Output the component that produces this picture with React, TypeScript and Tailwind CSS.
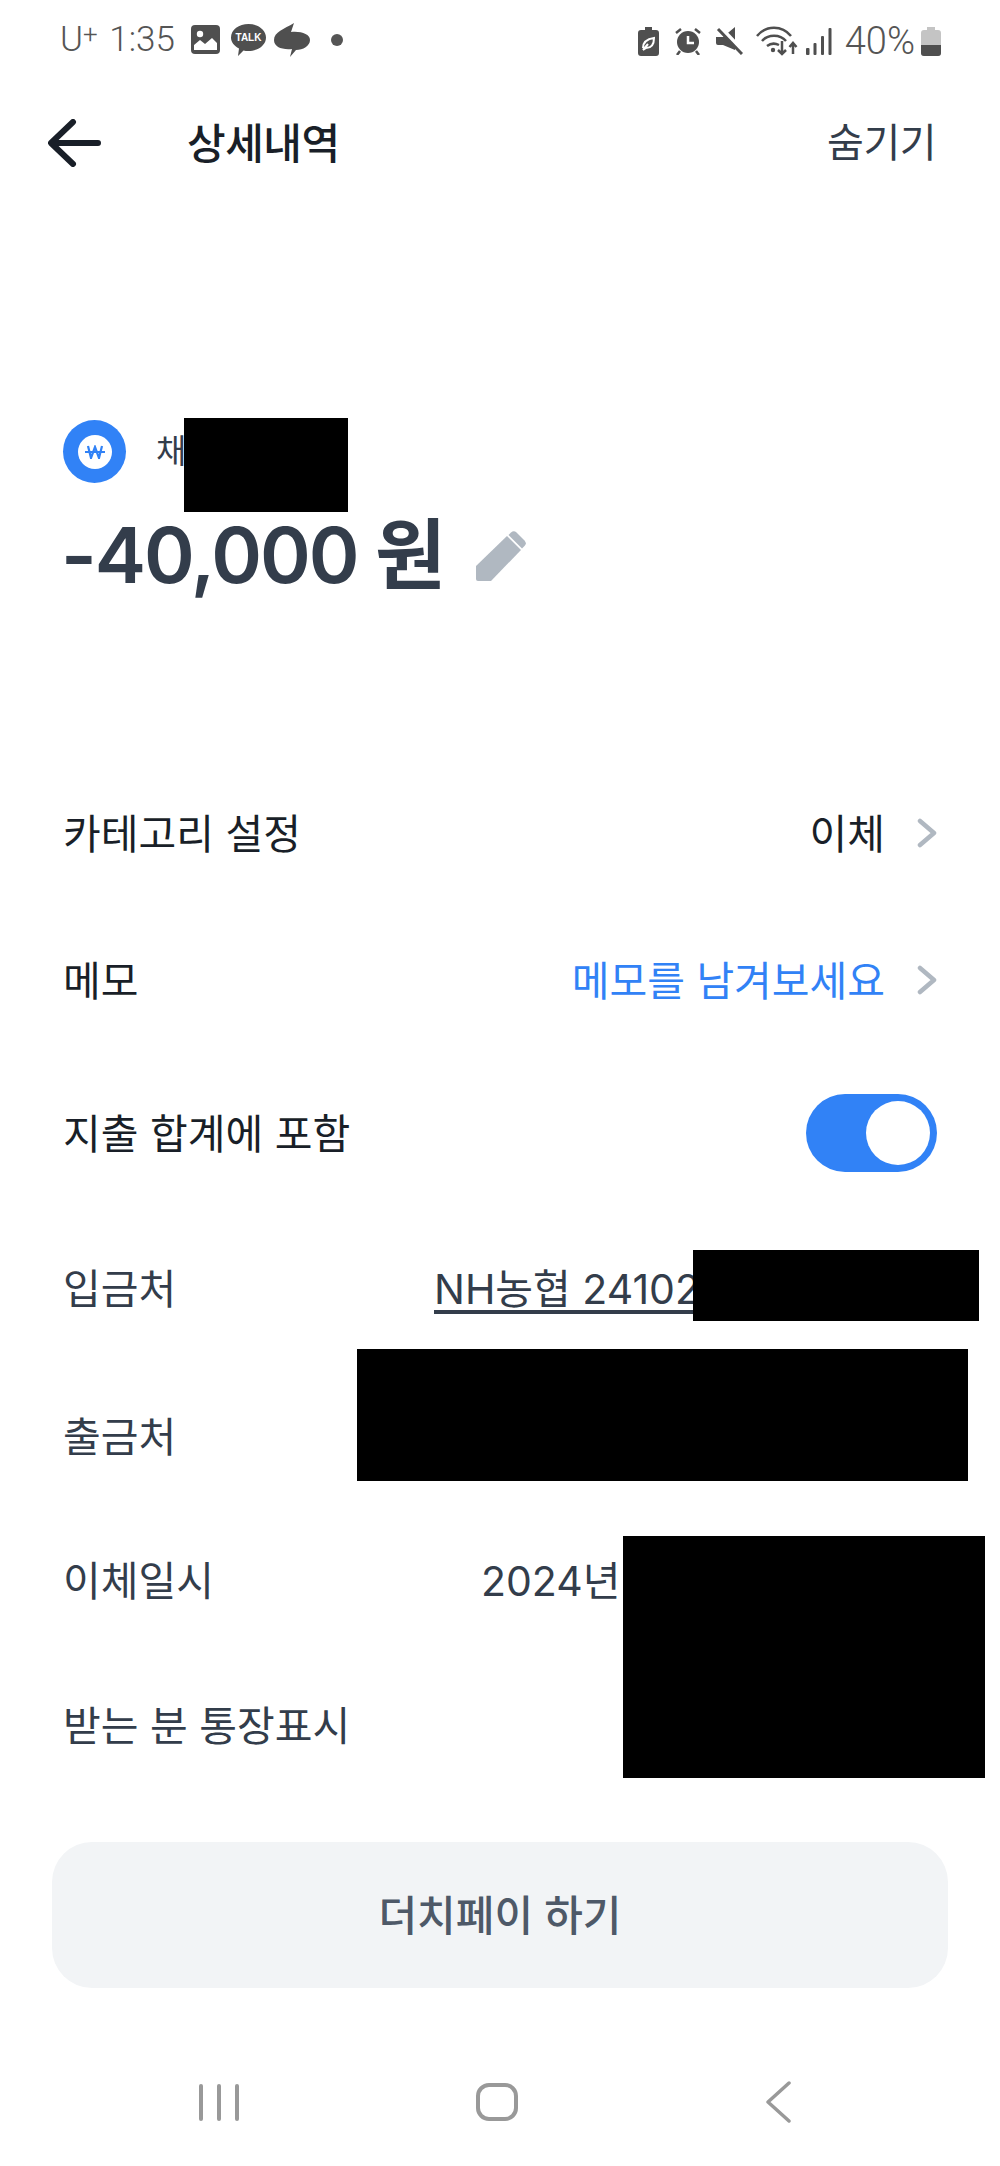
import React from 'react';

const koFont = 'font-["Inter","Noto_Sans_CJK_KR",sans-serif]';

// Rows under the amount. Heights differ in the capture, so they are per row.
const detailRows = [
  { label: '입금처', value: 'NH농협 24102', underline: true, height: 'h-[152px]', width: 'w-[503px]' },
  { label: '출금처', value: '', underline: false, height: 'h-[144px]', width: 'w-[503px]' },
  { label: '이체일시', value: '2024년', underline: false, height: 'h-[144px]', width: 'w-[456px]' },
  { label: '받는 분 통장표시', value: '', underline: false, height: 'h-[146px]', width: 'w-[456px]' }
];

const Chevron = () => (
  <svg width="20" height="30" viewBox="0 0 20 30" fill="none">
    <path d="M3 3l14 12L3 27" stroke="#b0b8c1" strokeWidth="4.500" strokeLinecap="round" strokeLinejoin="round" />
  </svg>
);

const StatusLeft = () => (
  <div className="flex items-center">
    <span className='font-["Roboto",sans-serif] font-light text-[35px] leading-none text-[#555] w-[131px] whitespace-nowrap'>
      U<sup className="text-[26px] leading-none top-[-8px] mr-[3px]">+</sup> 1:35
    </span>
    {/* gallery */}
    <svg width="29" height="29" viewBox="0 0 29 29" className="mr-[11px]">
      <rect width="29" height="29" rx="4" fill="#4f4f4f" />
      <circle cx="9" cy="9" r="3.200" fill="#fff" />
      <path d="M3 25v-5l6-5 5 4 7-6 5 5v7z" fill="#fff" />
    </svg>
    {/* kakaotalk */}
    <div className="relative w-[35px] h-[32px] mr-[8px]">
      <svg width="35" height="32" viewBox="0 0 35 32">
        <path d="M17.500 0C27 0 35 5.700 35 13.500S27 27 17.500 27c-2 0-3.500-.2-5-.6L7 32l1-7.500C3 22 0 18 0 13.500 0 5.700 8 0 17.500 0z" fill="#4f4f4f" />
      </svg>
      <span className='absolute left-0 right-0 top-[8px] text-center font-["Liberation_Sans",sans-serif] font-bold text-[10px] leading-[11px] text-white'>TALK</span>
    </div>
    {/* kakaostory */}
    <svg width="36" height="34" viewBox="0 0 36 34" className="mr-[21px]">
      <path d="M20 0l-3 9c10-1 19 2 19 8 0 6-7 10-14 10l-6 7 2-8C8 27 0 24 0 17 0 9 10 6 20 0z" fill="#4f4f4f" />
    </svg>
    <div className="w-[12px] h-[12px] rounded-full bg-[#555]" />
  </div>
);

const StatusRight = () => (
  <div className="flex items-center">
    {/* power saving battery */}
    <svg width="21" height="29" viewBox="0 0 21 29" className="mr-[15px]">
      <path d="M7 0h7v3h4a3 3 0 013 3v20a3 3 0 01-3 3H3a3 3 0 01-3-3V6a3 3 0 013-3h4z" fill="#4f4f4f" />
      <path d="M5 21c0-6 4-9 11-10 0 7-3 10-8 10l-3 2 5-6" fill="none" stroke="#fff" strokeWidth="2" />
    </svg>
    {/* alarm */}
    <svg width="28" height="28" viewBox="0 0 28 28" className="mr-[14px]">
      <circle cx="14" cy="15" r="11" fill="#4f4f4f" />
      <path d="M14 9v7h6" fill="none" stroke="#fff" strokeWidth="2.500" />
      <path d="M2 6l5-4M26 6l-5-4M6 24l-3 4M22 24l3 4" stroke="#4f4f4f" strokeWidth="2.500" />
    </svg>
    {/* muted speaker */}
    <svg width="27" height="28" viewBox="0 0 27 28" className="mr-[13px]">
      <path d="M0 10h7L19 0v23L7 18H2a2 2 0 01-2-2z" fill="#4f4f4f" />
      <path d="M4 0l24 25" stroke="#fff" strokeWidth="4" />
      <path d="M2 2l24 25" stroke="#4f4f4f" strokeWidth="3" />
    </svg>
    {/* wifi with traffic arrows */}
    <svg width="42" height="30" viewBox="0 0 42 30" className="mr-[8px]" fill="none" stroke="#4f4f4f" strokeWidth="2.500">
      <path d="M1 10c9-11 25-11 34 0M6 15c6-7 18-7 24 0M11 20c4-3 8-3 12-1" />
      <circle cx="17" cy="24" r="2.200" fill="#4f4f4f" stroke="none" />
      <path d="M26 15v13M22 24l4 4 4-4M37 28V17M33.500 21l3.500-4 3.500 4" />
    </svg>
    {/* signal */}
    <svg width="26" height="27" viewBox="0 0 26 27" className="mr-[13px]" fill="#4f4f4f">
      <rect x="0" y="20" width="3.500" height="7" rx="1" />
      <rect x="7.500" y="15" width="3" height="12" rx="1" />
      <rect x="15" y="8" width="3" height="19" rx="1" />
      <rect x="22.500" y="0" width="3" height="27" rx="1" />
    </svg>
    <span className='font-["Roboto",sans-serif] font-light text-[38px] leading-none text-[#555] mr-[6px]'>40%</span>
    {/* battery */}
    <svg width="20" height="29" viewBox="0 0 20 29">
      <path d="M6 0h8v3h3a3 3 0 013 3v20a3 3 0 01-3 3H3a3 3 0 01-3-3V6a3 3 0 013-3h3z" fill="#c4c4c4" />
      <path d="M0 18h20v8a3 3 0 01-3 3H3a3 3 0 01-3-3z" fill="#4f4f4f" />
    </svg>
  </div>
);

export default function App() {
  return (
    <div className={`relative w-[1000px] h-[2166px] overflow-hidden bg-white ${koFont}`}>
      {/* Status bar */}
      <div className="h-[76px] pl-[60px] pr-[59px] pt-[22px] flex items-start justify-between">
        <StatusLeft />
        <StatusRight />
      </div>

      {/* Header */}
      <div className="h-[134px] pl-[48px] pr-[64px] flex items-center">
        <svg width="54" height="48" viewBox="0 0 54 48" fill="none" className="mr-[85px]">
          <path d="M25 3L3 24l22 21M4 24h46" stroke="#191f28" strokeWidth="6" strokeLinecap="round" strokeLinejoin="round" />
        </svg>
        <h1 className="text-[42px] font-medium tracking-[-0.5px] text-[#191f28]">상세내역</h1>
        <span className="ml-auto text-[40px] text-[#333d4b] tracking-[-0.5px]">숨기기</span>
      </div>

      {/* Amount */}
      <div className="h-[550px] pl-[63px] pt-[210px]">
        <div className="flex items-center">
          <div className="w-[63px] h-[63px] rounded-full bg-[#3182f6] flex items-center justify-center">
            <div className="w-[34px] h-[34px] rounded-full bg-white flex items-center justify-center">
              <svg width="20" height="14" viewBox="0 0 20 14" fill="none" stroke="#3182f6" strokeWidth="2.200">
                <path d="M3 1l3 12 4-11 4 11 3-12M0 7h20" />
              </svg>
            </div>
          </div>
          <span className="ml-[30px] text-[33px] text-[#333d4b]">채</span>
        </div>
        <div className="flex items-center mt-[20px] -ml-[2px]">
          <span className="text-[77px] leading-[104px] font-semibold text-[#333d4b] tracking-[-2px]">-40,000 원</span>
          <svg width="50" height="50" viewBox="0 0 50 50" className="ml-[32px] mt-[2px]" fill="#b0b8c1">
            <path d="M0 35L31 5l14 14-30 31H2a2 2 0 01-2-2z" />
            <path d="M35 1.500a4 4 0 015.500 0l8 8a4 4 0 010 5.500L46 17.500 32.500 4z" />
          </svg>
        </div>
      </div>

      {/* Settings */}
      <div className="pl-[63px] pr-[63px] text-[41px] text-[#191f28]">
        <div className="h-[146px] flex items-center">
          <span className="pt-[3px]">카테고리 설정</span>
          <span className="ml-auto mr-[32px] pt-[3px]">이체</span>
          <Chevron />
        </div>
        <div className="h-[148px] flex items-center">
          <span className="pt-[3px]">메모</span>
          <span className="ml-auto mr-[32px] pt-[3px] text-[#3182f6]">메모를 남겨보세요</span>
          <Chevron />
        </div>
        <div className="h-[158px] flex items-center">
          <span className="pt-[3px]">지출 합계에 포함</span>
          <div className="ml-auto w-[131px] h-[78px] rounded-full bg-[#3182f6] flex items-center justify-end pr-[7px]">
            <div className="w-[64px] h-[64px] rounded-full bg-white" />
          </div>
        </div>

        {detailRows.map((row) => (
          <div key={row.label} className={`${row.height} flex items-center justify-between text-[#333d4b]`}>
            <span className="pt-[3px]">{row.label}</span>
            <span className={`${row.width} pt-[3px] whitespace-nowrap ${row.underline ? 'underline underline-offset-[6px]' : ''}`}>
              {row.value}
            </span>
          </div>
        ))}
      </div>

      {/* Dutch pay */}
      <div className="px-[52px] mt-[44px]">
        <button className="w-full h-[146px] rounded-[40px] bg-[#f2f4f6] text-[42px] font-medium text-[#4e5968]">
          더치페이 하기
        </button>
      </div>

      {/* Android nav */}
      <div className="flex items-center pl-[199px] mt-[93px]">
        <div className="flex gap-[14px]">
          <div className="w-[4px] h-[37px] rounded-full bg-[#999]" />
          <div className="w-[4px] h-[37px] rounded-full bg-[#999]" />
          <div className="w-[4px] h-[37px] rounded-full bg-[#999]" />
        </div>
        <div className="ml-[237px] w-[42px] h-[38px] rounded-[13px] border-[4px] border-[#999]" />
        <svg width="26" height="42" viewBox="0 0 26 42" fill="none" className="ml-[247px]">
          <path d="M24 2L3 21l21 19" stroke="#999" strokeWidth="3.500" strokeLinecap="round" strokeLinejoin="round" />
        </svg>
      </div>

      {/* Redaction blocks over the private values */}
      <div className="absolute left-[184px] top-[418px] w-[164px] h-[94px] bg-black" />
      <div className="absolute left-[693px] top-[1250px] w-[286px] h-[71px] bg-black" />
      <div className="absolute left-[357px] top-[1349px] w-[611px] h-[132px] bg-black" />
      <div className="absolute left-[623px] top-[1536px] w-[362px] h-[242px] bg-black" />
    </div>
  );
}
